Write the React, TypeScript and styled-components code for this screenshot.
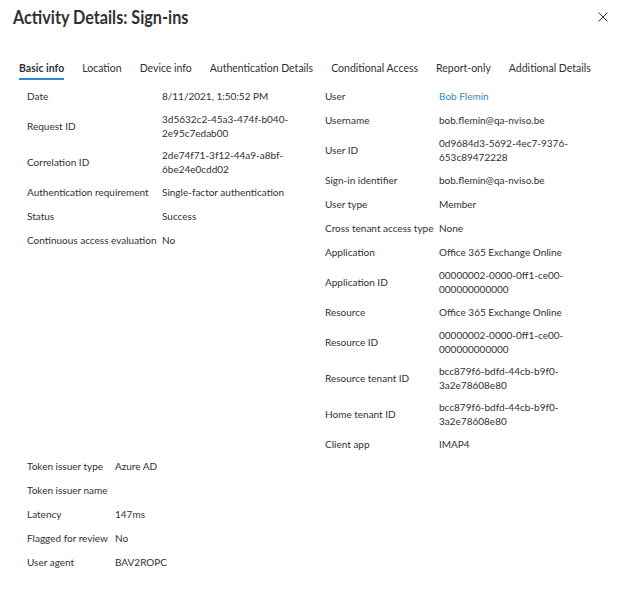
import React from "react";
import styled, { createGlobalStyle } from "styled-components";

const Global = createGlobalStyle`
  html, body { margin: 0; padding: 0; background: #ffffff; }
  body { font-family: "Segoe UI", Lato, "Noto Sans", sans-serif; color: #323130; }
`;

const Page = styled.div`
  width: 627px;
  height: 598px;
  box-sizing: border-box;
  background: #fff;
  overflow: hidden;
`;

const Header = styled.header`
  display: flex;
  align-items: center;
  justify-content: space-between;
  padding: 1px 19px 0 13px;
  height: 31px;
`;

const Title = styled.h1`
  margin: 0;
  font-size: 16.2px;
  font-weight: 700;
  color: #323130;
  transform: scaleY(1.12);
  transform-origin: center;
`;

const Close = styled.button`
  border: 0;
  background: none;
  padding: 0;
  width: 10px;
  height: 10px;
  display: flex;
  cursor: pointer;
`;

const Tabs = styled.nav`
  display: flex;
  gap: 18px;
  padding: 0 0 0 19px;
  margin-top: 26px;
  height: 22px;
`;

const Tab = styled.div<{ $active?: boolean }>`
  position: relative;
  font-size: 10.5px;
  line-height: 20px;
  height: 20px;
  font-weight: ${(p) => (p.$active ? 700 : 400)};
  color: #323130;
  white-space: nowrap;
  &::after {
    content: "";
    display: ${(p) => (p.$active ? "block" : "none")};
    position: absolute;
    left: 0;
    right: 0;
    bottom: -2px;
    height: 2px;
    background: #2b88d8;
  }
`;

const Columns = styled.div`
  display: grid;
  grid-template-columns: 298px 1fr;
  padding: 0 0 0 27px;
  margin-top: 4px;
`;

const Table = styled.div<{ $label: number }>`
  display: grid;
  grid-template-columns: ${(p) => p.$label}px 1fr;
  grid-auto-rows: minmax(24px, auto);
  align-content: start;
`;

const Cell = styled.div`
  display: flex;
  flex-direction: column;
  justify-content: center;
  font-size: 10px;
  line-height: 14px;
  padding: 4px 0;
  white-space: nowrap;
`;

const Link = styled.span`
  color: #2b88d8;
`;

const Bottom = styled.div`
  padding: 0 0 0 27px;
  margin-top: -2px;
`;

type Row = [string, React.ReactNode];

const left: Row[] = [
  ["Date", "8/11/2021, 1:50:52 PM"],
  ["Request ID", ["3d5632c2-45a3-474f-b040-", "2e95c7edab00"]],
  ["Correlation ID", ["2de74f71-3f12-44a9-a8bf-", "6be24e0cdd02"]],
  ["Authentication requirement", "Single-factor authentication"],
  ["Status", "Success"],
  ["Continuous access evaluation", "No"],
];

const right: Row[] = [
  ["User", <Link>Bob Flemin</Link>],
  ["Username", "bob.flemin@qa-nviso.be"],
  ["User ID", ["0d9684d3-5692-4ec7-9376-", "653c89472228"]],
  ["Sign-in identifier", "bob.flemin@qa-nviso.be"],
  ["User type", "Member"],
  ["Cross tenant access type", "None"],
  ["Application", "Office 365 Exchange Online"],
  ["Application ID", ["00000002-0000-0ff1-ce00-", "000000000000"]],
  ["Resource", "Office 365 Exchange Online"],
  ["Resource ID", ["00000002-0000-0ff1-ce00-", "000000000000"]],
  ["Resource tenant ID", ["bcc879f6-bdfd-44cb-b9f0-", "3a2e78608e80"]],
  ["Home tenant ID", ["bcc879f6-bdfd-44cb-b9f0-", "3a2e78608e80"]],
  ["Client app", "IMAP4"],
];

const bottom: Row[] = [
  ["Token issuer type", "Azure AD"],
  ["Token issuer name", ""],
  ["Latency", "147ms"],
  ["Flagged for review", "No"],
  ["User agent", "BAV2ROPC"],
];

function renderRows(rows: Row[]) {
  return rows.map(([k, v]) => (
    <React.Fragment key={k}>
      <Cell>{k}</Cell>
      <Cell>
        {Array.isArray(v) ? v.map((line, i) => <span key={i}>{line}</span>) : v}
      </Cell>
    </React.Fragment>
  ));
}

const tabs = [
  "Basic info",
  "Location",
  "Device info",
  "Authentication Details",
  "Conditional Access",
  "Report-only",
  "Additional Details",
];

export default function App() {
  return (
    <Page>
      <Global />
      <Header>
        <Title>Activity Details: Sign-ins</Title>
        <Close aria-label="Close">
          <svg width="10" height="10" viewBox="0 0 10 10">
            <path d="M0.5 0.5 L9.5 9.5 M9.5 0.5 L0.5 9.5" stroke="#323130" strokeWidth="1" fill="none" />
          </svg>
        </Close>
      </Header>
      <Tabs>
        {tabs.map((t, i) => (
          <Tab key={t} $active={i === 0}>
            {t}
          </Tab>
        ))}
      </Tabs>
      <Columns>
        <Table $label={135}>{renderRows(left)}</Table>
        <Table $label={114}>{renderRows(right)}</Table>
      </Columns>
      <Bottom>
        <Table $label={88}>{renderRows(bottom)}</Table>
      </Bottom>
    </Page>
  );
}
